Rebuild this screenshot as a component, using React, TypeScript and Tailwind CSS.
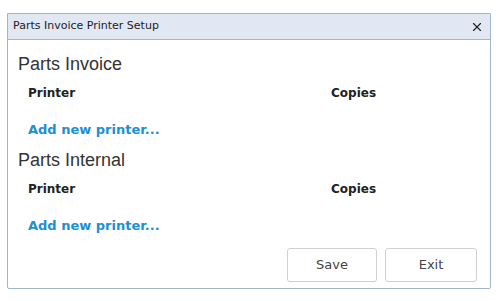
import { X } from 'lucide-react';

interface PrinterSectionProps {
    title: string;
}

// one block: heading, column labels, add link
function PrinterSection({ title }: PrinterSectionProps) {
    return (
        <div className="flex flex-col">
            <div className="pl-[10px] h-[22px] leading-[22px] text-[18px] text-[#333] font-['Liberation_Sans',Arial,sans-serif]">
                {title}
            </div>
            <div className="mt-[10px] pl-[20px] flex h-[16px] items-center text-[12px] font-bold text-[#222]">
                <div className="w-[303px]">Printer</div>
                <div>Copies</div>
            </div>
            <div className="mt-[21px] pl-[20px] h-[16px] flex items-center text-[13px] font-bold text-[#1b8fd6]">
                Add new printer...
            </div>
        </div>
    );
}

export default function App() {
    return (
        <div className="w-[496px] h-[301px] bg-white pt-[13px] pl-[7px] font-['DejaVu_Sans',Verdana,sans-serif]">
            <div className="w-[484px] h-[276px] flex flex-col border border-[#a3b6cb] rounded-b-[2px] bg-white">
                {/* title bar */}
                <div className="h-[26px] shrink-0 flex items-center justify-between bg-[#e1e8f4] border-b border-[#a3b6cb] pl-[5px] pr-[6px]">
                    <span className="text-[11px] text-[#222]">Parts Invoice Printer Setup</span>
                    <X size={14} strokeWidth={2} className="text-[#222]" />
                </div>

                <div className="flex-1 flex flex-col pt-[13px]">
                    <PrinterSection title="Parts Invoice" />
                    <div className="mt-[11px]">
                        <PrinterSection title="Parts Internal" />
                    </div>
                </div>

                {/* footer buttons */}
                <div className="flex justify-end gap-[8px] pr-[13px] pb-[6px]">
                    <button className="w-[90px] h-[34px] rounded-[3px] border border-[#d0d0d0] bg-white text-[13px] text-[#444]">
                        Save
                    </button>
                    <button className="w-[92px] h-[34px] rounded-[3px] border border-[#d0d0d0] bg-white text-[13px] text-[#444]">
                        Exit
                    </button>
                </div>
            </div>
        </div>
    );
}
